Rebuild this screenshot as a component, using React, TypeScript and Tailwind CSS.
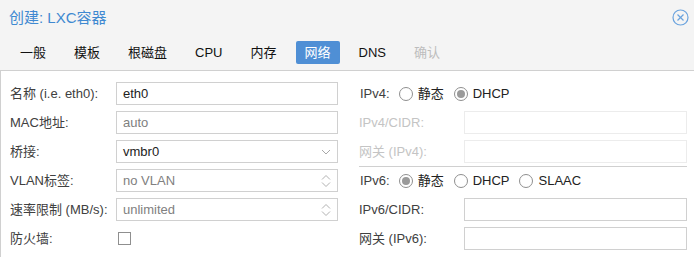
import React from "react";

const Chevron = () => (
  <svg width="10" height="6" viewBox="0 0 10 6" className="shrink-0">
    <polyline points="1,1 5,5 9,1" fill="none" stroke="#a8a8a8" strokeWidth="1" />
  </svg>
);

const Spinner = () => (
  <svg width="10" height="12" viewBox="0 0 10 12" className="shrink-0">
    <polyline points="1,4.5 5,0.5 9,4.5" fill="none" stroke="#b0b0b0" strokeWidth="1" />
    <polyline points="1,7.5 5,11.5 9,7.5" fill="none" stroke="#b0b0b0" strokeWidth="1" />
  </svg>
);

const Radio = ({ checked }: { checked?: boolean }) => (
  <span className="w-[14px] h-[14px] rounded-full border border-[#8f8f8f] bg-white flex items-center justify-center shrink-0">
    {checked && <span className="w-[8px] h-[8px] rounded-full bg-[#9a9a9a]" />}
  </span>
);

type FieldProps = {
  label: string;
  value?: string;
  placeholder?: boolean;
  disabled?: boolean;
  icon?: "combo" | "spin";
  labelW: string;
  labelColor?: string;
};

const Field = ({ label, value, placeholder, disabled, icon, labelW, labelColor }: FieldProps) => (
  <div className="flex items-center h-[23px]">
    <div className={`${labelW} shrink-0 ${labelColor ?? (disabled ? "text-[#c4c4c4]" : "text-[#404040]")}`}>{label}</div>
    <div
      className={`flex-1 h-[23px] border flex items-center justify-between pl-[6px] pr-[6px] bg-white ${
        disabled ? "border-[#ececec]" : "border-[#d0d0d0]"
      }`}
    >
      <span className={placeholder ? "text-[#808080]" : "text-[#222222]"}>{value}</span>
      {icon === "combo" && <Chevron />}
      {icon === "spin" && <Spinner />}
    </div>
  </div>
);

const tabs = ["一般", "模板", "根磁盘", "CPU", "内存", "网络", "DNS", "确认"];

export default function App() {
  return (
    <div className="w-[694px] h-[257px] overflow-hidden bg-[#f4f4f4] font-['Liberation_Sans','Noto_Sans_CJK_SC',sans-serif] text-[13px] leading-none">
      <div className="h-[34px] flex items-center justify-between pl-[9px] pr-[5px]">
        <span className="text-[15px] text-[#3f89d1]">创建: LXC容器</span>
        <svg width="17" height="17" viewBox="0 0 17 17">
          <circle cx="8.5" cy="8.5" r="7.5" fill="none" stroke="#6aa3de" strokeWidth="1.2" />
          <line x1="5.5" y1="5.5" x2="11.5" y2="11.5" stroke="#6aa3de" strokeWidth="1.2" />
          <line x1="11.5" y1="5.5" x2="5.5" y2="11.5" stroke="#6aa3de" strokeWidth="1.2" />
        </svg>
      </div>
      <div className="flex gap-[10px] pl-[11px] pt-[7px] pb-[6px]">
        {tabs.map((t) => (
          <div
            key={t}
            className={`h-[23px] px-[9px] flex items-center rounded-[2px] ${
              t === "网络" ? "bg-[#4f8fd5] text-white" : t === "确认" ? "text-[#bdbdbd]" : "text-[#111111]"
            }`}
          >
            {t}
          </div>
        ))}
      </div>
      <div className="bg-white border-t border-l border-[#d0d0d0] h-[200px] flex pl-[9px] pr-[7px] pt-[11px] gap-[21px]">
        <div className="w-[328px] flex flex-col gap-[6px]">
          <Field labelW="w-[106px]" label="名称 (i.e. eth0):" value="eth0" />
          <Field labelW="w-[106px]" label="MAC地址:" value="auto" placeholder />
          <Field labelW="w-[106px]" label="桥接:" value="vmbr0" icon="combo" />
          <Field labelW="w-[106px]" label="VLAN标签:" value="no VLAN" placeholder icon="spin" />
          <Field labelW="w-[106px]" label="速率限制 (MB/s):" value="unlimited" placeholder icon="spin" />
          <div className="flex items-center h-[23px]">
            <div className="w-[106px] shrink-0 text-[#404040]">防火墙:</div>
            <span className="ml-[2px] w-[13px] h-[13px] border border-[#8f8f8f] bg-white" />
          </div>
        </div>
        <div className="w-[328px] flex flex-col">
          <div className="flex flex-col gap-[6px] pb-[3px] border-b border-[#d0d0d0]">
            <div className="flex items-center h-[23px] text-[#222222]">
              <span className="pl-[1px] text-[#404040]">IPv4:</span>
              <span className="ml-[9px] flex items-center gap-[5px]"><Radio />静态</span>
              <span className="ml-[10px] flex items-center gap-[5px]"><Radio checked />DHCP</span>
            </div>
            <Field labelW="w-[105px]" label="IPv4/CIDR:" disabled />
            <Field labelW="w-[105px]" label="网关 (IPv4):" disabled />
          </div>
          <div className="flex flex-col gap-[6px] pt-[2px]">
            <div className="flex items-center h-[23px] text-[#222222]">
              <span className="pl-[1px] text-[#404040]">IPv6:</span>
              <span className="ml-[9px] flex items-center gap-[5px]"><Radio checked />静态</span>
              <span className="ml-[10px] flex items-center gap-[5px]"><Radio />DHCP</span>
              <span className="ml-[10px] flex items-center gap-[5px]"><Radio />SLAAC</span>
            </div>
            <Field labelW="w-[105px]" label="IPv6/CIDR:" />
            <Field labelW="w-[105px]" label="网关 (IPv6):" />
          </div>
        </div>
      </div>
    </div>
  );
}
